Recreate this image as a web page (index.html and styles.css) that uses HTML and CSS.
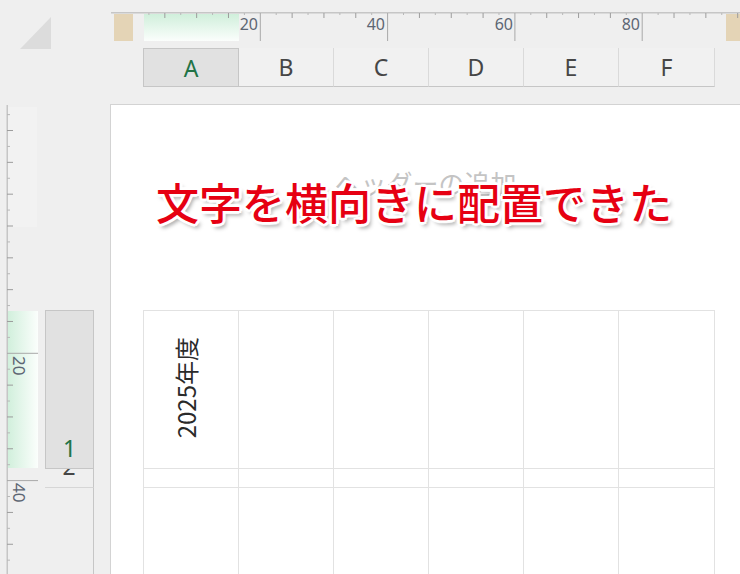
FILE: index.html
```html
<!DOCTYPE html>
<html lang="ja">
<head>
<meta charset="utf-8">
<title>Excel page layout</title>
<link rel="stylesheet" href="styles.css">
</head>
<body>
<div class="app">
  <div class="corner"><div class="tri"></div></div>

  <div class="top">
    <svg class="hruler" width="630" height="42" viewBox="0 0 630 42">
      <defs>
        <linearGradient id="gh" x1="0" y1="0" x2="0" y2="1">
          <stop offset="0" stop-color="#d0efdb"/>
          <stop offset="1" stop-color="#fbfefc"/>
        </linearGradient>
      </defs>
      <rect x="1" y="12" width="629" height="1.5" fill="#c6c6c6"/>
      <rect x="4" y="14" width="19" height="27" fill="#e4d4b6"/>
      <rect x="34" y="14" width="95" height="27" fill="url(#gh)"/>
      <rect x="616" y="14" width="14" height="27" fill="#e4d4b6"/>
      <path class="tick" d="M54.83 13V18M86.65 13V18M118.48 13V18M182.13 13V18M213.95 13V18M245.78 13V18M309.43 13V18M341.25 13V18M373.08 13V18M436.73 13V18M468.55 13V18M500.38 13V18M564.03 13V18M595.85 13V18M627.68 13V18"/>
      <path class="tick small" d="M38.91 13V15M70.74 13V15M102.56 13V15M134.39 13V15M166.21 13V15M198.04 13V15M229.86 13V15M261.69 13V15M293.51 13V15M325.34 13V15M357.16 13V15M388.99 13V15M420.81 13V15M452.64 13V15M484.46 13V15M516.29 13V15M548.11 13V15M579.94 13V15M611.76 13V15"/>
      <path class="tick major" d="M150.3 13V41M277.6 13V41M404.9 13V41M532.2 13V41"/>
      <text class="rnum" x="148" y="30" text-anchor="end">20</text>
      <text class="rnum" x="275" y="30" text-anchor="end">40</text>
      <text class="rnum" x="403" y="30" text-anchor="end">60</text>
      <text class="rnum" x="530" y="30" text-anchor="end">80</text>
    </svg>
    <div class="colheads">
      <div class="ch sel">A</div>
      <div class="ch">B</div>
      <div class="ch">C</div>
      <div class="ch">D</div>
      <div class="ch">E</div>
      <div class="ch last">F</div>
    </div>
  </div>

  <div class="side">
    <svg class="vruler" width="40" height="470" viewBox="0 0 40 470">
      <defs>
        <linearGradient id="gv" x1="0" y1="0" x2="1" y2="0">
          <stop offset="0" stop-color="#d0efdb"/>
          <stop offset="1" stop-color="#fbfefc"/>
        </linearGradient>
      </defs>
      <rect x="8" y="3" width="29" height="120" fill="#f2f2f2"/>
      <rect x="7" y="207" width="31" height="157" fill="url(#gv)"/>
      <rect x="6.5" y="1" width="1.5" height="469" fill="#c6c6c6"/>
      <path class="tick" d="M7 26.53H13M7 58.35H13M7 90.18H13M7 122H13M7 153.83H13M7 185.65H13M7 217.48H13M7 281.13H13M7 312.95H13M7 344.78H13M7 408.43H13M7 440.25H13"/>
      <path class="tick small" d="M7 10.61H10M7 42.44H10M7 74.26H10M7 106.09H10M7 137.91H10M7 169.74H10M7 201.56H10M7 233.39H10M7 265.21H10M7 297.04H10M7 328.86H10M7 360.69H10M7 392.51H10M7 424.34H10M7 456.16H10"/>
      <path class="tick major" d="M7 249.3H38M7 376.6H38"/>
      <text class="rnum vnum" transform="translate(12.5 252) rotate(90)">20</text>
      <text class="rnum vnum" transform="translate(12.5 379) rotate(90)">40</text>
    </svg>
    <div class="rowheads">
      <div class="rh sel"><span>1</span></div>
      <div class="rh r2"><span>2</span></div>
      <div class="rh r3"></div>
    </div>
  </div>

  <div class="page">
    <div class="hdr-area"><span class="hint">ヘッダーの追加</span></div>
    <div class="sheet">
      <div class="cell a1"><span class="vtext">2025年度</span></div>
      <div class="cell"></div><div class="cell"></div><div class="cell"></div><div class="cell"></div><div class="cell"></div>
      <div class="cell"></div><div class="cell"></div><div class="cell"></div><div class="cell"></div><div class="cell"></div><div class="cell"></div>
      <div class="cell"></div><div class="cell"></div><div class="cell"></div><div class="cell"></div><div class="cell"></div><div class="cell"></div>
    </div>
  </div>

  <div class="callout">文字を横向きに配置できた</div>
</div>
</body>
</html>
```

FILE: styles.css
```css
* { box-sizing: border-box; }
html, body { margin: 0; padding: 0; }
body {
  width: 740px;
  height: 574px;
  overflow: hidden;
  background: #efefef;
  font-family: "Noto Sans", "Noto Sans CJK JP", sans-serif;
}
.app {
  position: relative;
  display: grid;
  grid-template-columns: 110px 630px;
  grid-template-rows: 104px 470px;
}
.corner { padding: 17px 0 0 20px; }
.tri {
  width: 31px;
  height: 32px;
  background: #dcdcdc;
  clip-path: polygon(100% 0, 100% 100%, 0 100%);
}
.top { display: flex; flex-direction: column; }
.hruler { display: block; }
.tick { stroke: #9c9c9c; stroke-width: 1; fill: none; }
.tick.small { stroke: #b8b8b8; }
.tick.major { stroke: #a8a8a8; }
.rnum {
  font-family: "Noto Sans", sans-serif;
  font-size: 16px;
  fill: #5d6673;
}
.vnum { font-size: 17px; }
.colheads {
  display: flex;
  margin-top: 6px;
  padding-left: 33px;
  height: 39px;
}
.ch {
  width: 95px;
  height: 39px;
  display: flex;
  align-items: center;
  justify-content: center;
  font-size: 23px;
  color: #464646;
  background: #f1f1f1;
  border-right: 1px solid #dadada;
  border-bottom: 1px solid #c6c6c6;
}
.ch.sel {
  width: 96px;
  background: #e1e1e1;
  color: #217346;
  border: 1px solid #c6c6c6;
}
.ch.last { width: 96px; }

.side { display: flex; }
.vruler { display: block; flex: none; }
.rowheads {
  margin-left: 5px;
  padding-top: 206px;
  width: 49px;
  display: flex;
  flex-direction: column;
}
.rh {
  display: flex;
  justify-content: center;
  align-items: flex-start;
  overflow: hidden;
  font-size: 23px;
  line-height: 1;
  color: #464646;
  border-right: 1px solid #c6c6c6;
  border-bottom: 1px solid #d6d6d6;
}
.rh.sel {
  height: 159px;
  background: #e1e1e1;
  color: #217346;
  border: 1px solid #c6c6c6;
  align-items: flex-end;
  padding-bottom: 8px;
}
.rh.r2 { height: 19px; }
.rh.r2 span { margin-top: -14px; }
.rh.r3 { flex: 1; border-bottom: none; }

.page {
  background: #fff;
  border-left: 1px solid #d3d3d3;
  border-top: 1px solid #d3d3d3;
  overflow: hidden;
}
.hdr-area {
  height: 205px;
  padding-top: 65px;
  text-align: center;
}
.hint {
  font-family: "Noto Sans CJK JP", sans-serif;
  font-size: 26px;
  line-height: 1;
  color: #c4c4c4;
}
.sheet {
  margin-left: 32px;
  display: grid;
  grid-template-columns: repeat(5, 95px) 96px;
  grid-template-rows: 158px 19px 120px;
  width: max-content;
  border-left: 1px solid #e2e2e2;
  border-top: 1px solid #e2e2e2;
}
.cell {
  border-right: 1px solid #e2e2e2;
  border-bottom: 1px solid #e2e2e2;
}
.a1 {
  display: flex;
  align-items: flex-end;
  justify-content: center;
  padding: 0 11px 30px 0;
}
.vtext {
  writing-mode: vertical-rl;
  text-orientation: sideways;
  transform: rotate(180deg);
  font-family: "Noto Sans CJK JP", sans-serif;
  font-size: 24px;
  line-height: 1;
  color: #2a2a2a;
}
.callout {
  position: absolute;
  left: 156px;
  top: 180px;
  font-family: "Noto Sans CJK JP", sans-serif;
  font-weight: 500;
  font-size: 43px;
  line-height: 1;
  color: #e60012;
  white-space: nowrap;
  text-shadow:
    2px 0 0 #fff, -2px 0 0 #fff, 0 2px 0 #fff, 0 -2px 0 #fff,
    2px 2px 0 #fff, -2px -2px 0 #fff, 2px -2px 0 #fff, -2px 2px 0 #fff,
    3px 0 1px #fff, -3px 0 1px #fff, 0 3px 1px #fff, 0 -3px 1px #fff,
    3px 4px 4px rgba(0, 0, 0, 0.4);
}
```
